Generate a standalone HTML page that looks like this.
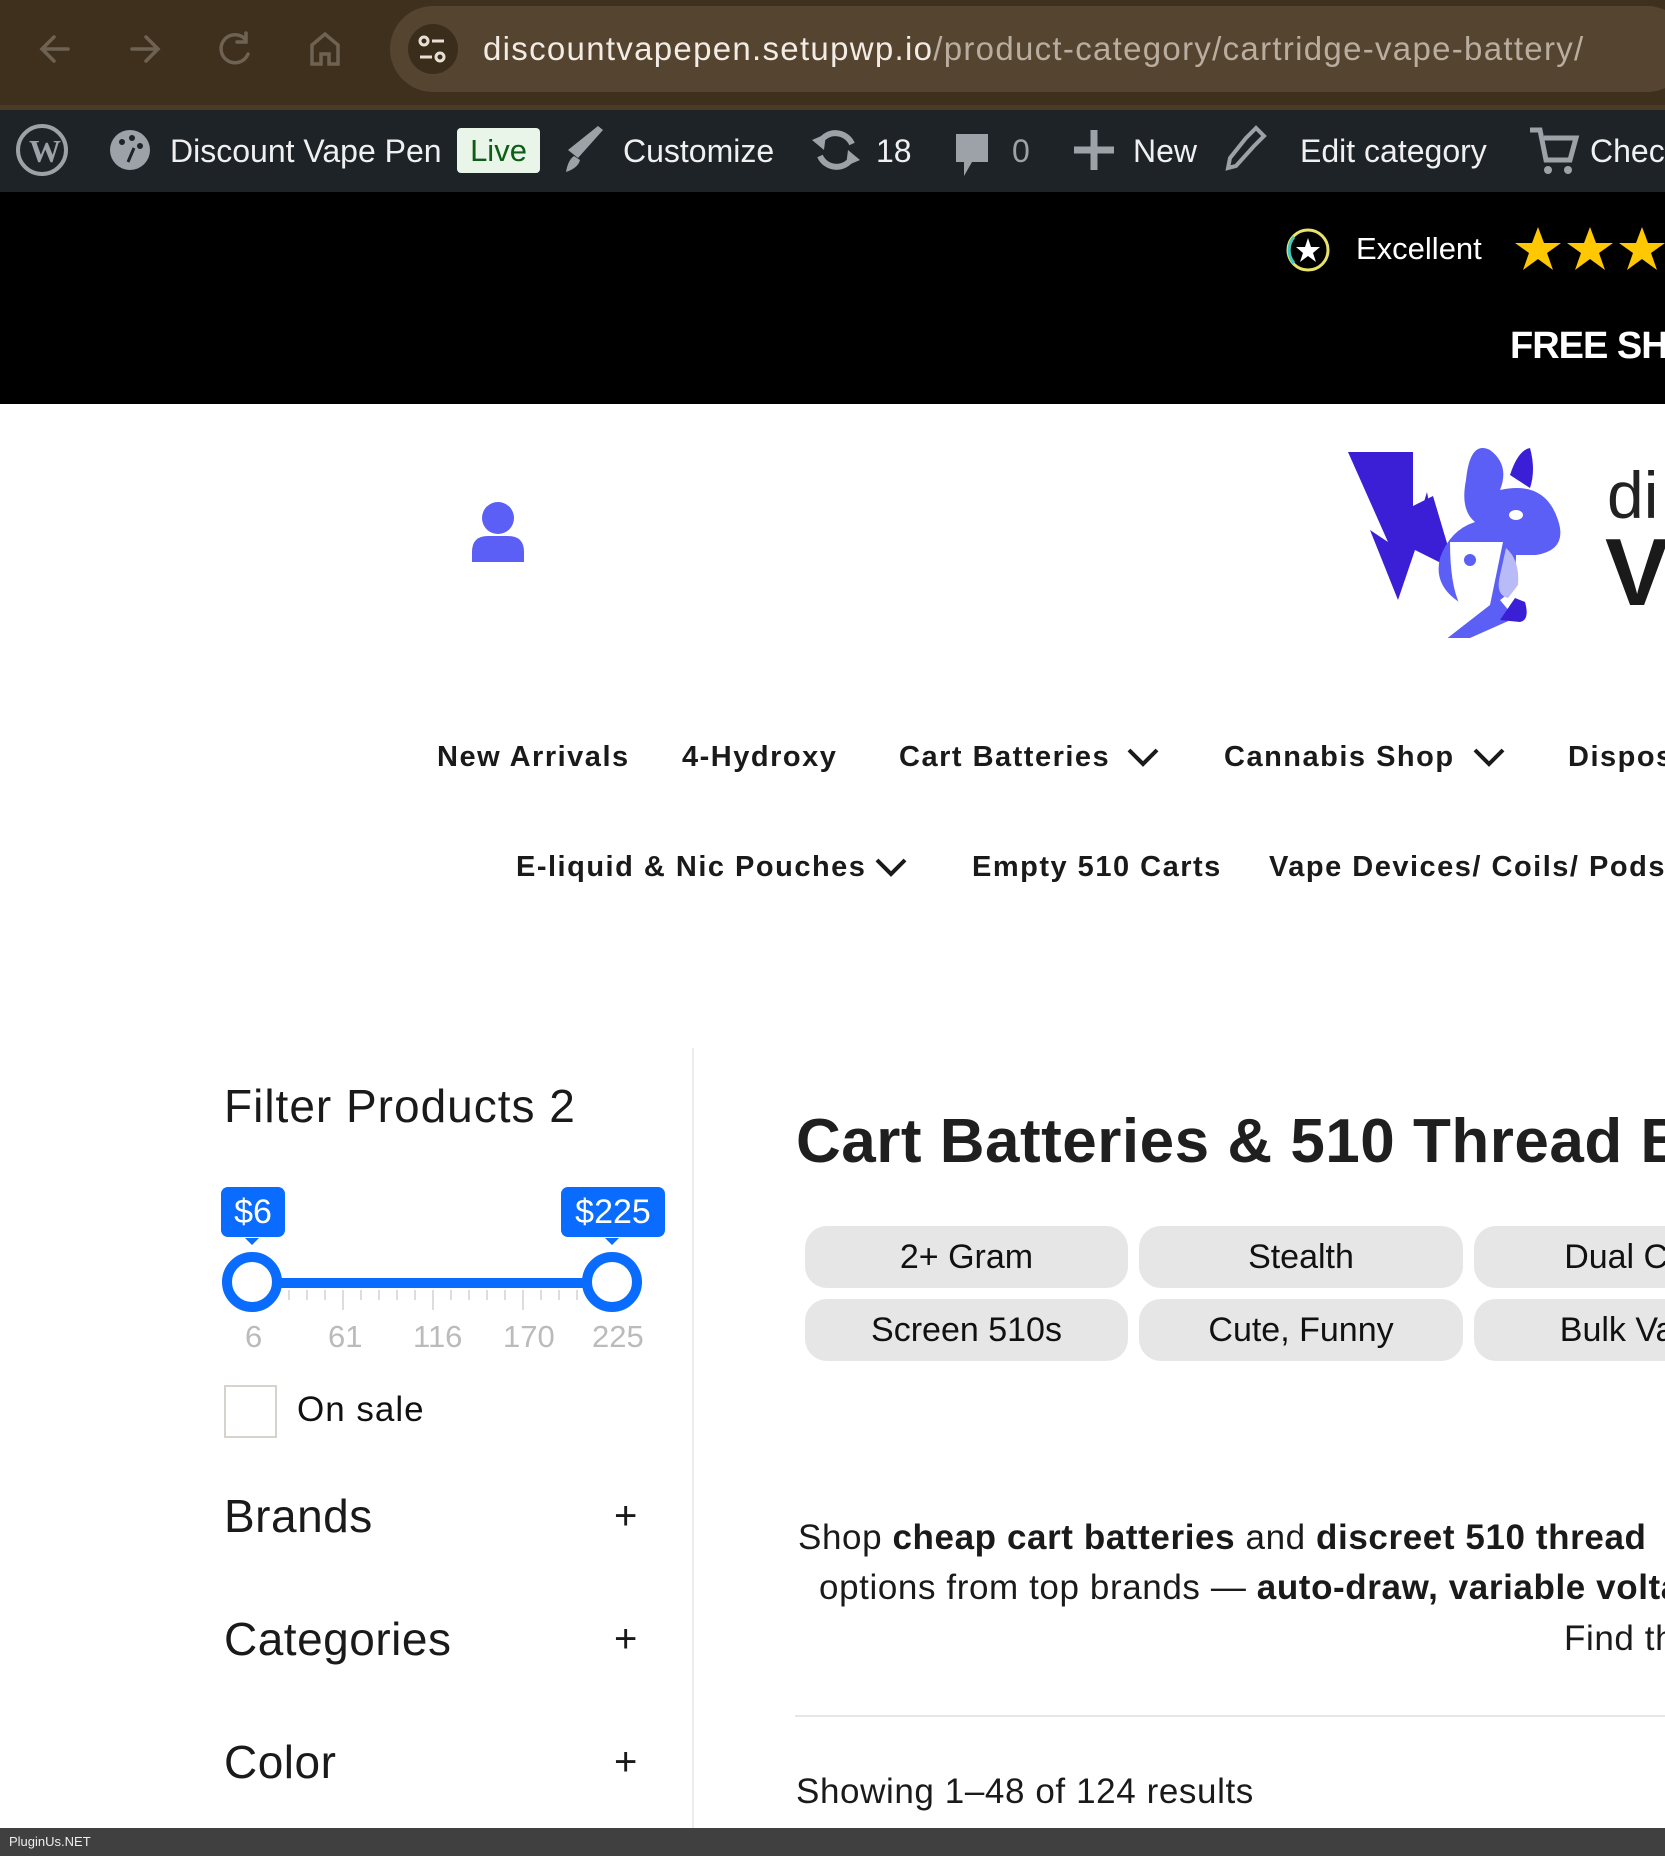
<!DOCTYPE html>
<html><head><meta charset="utf-8"><style>
*{margin:0;padding:0;box-sizing:border-box}
html,body{width:1665px;height:1856px;overflow:hidden;background:#fff;font-family:"Liberation Sans",sans-serif;position:relative}
#wrap{position:absolute;left:0;top:0;width:1665px;height:1856px;overflow:hidden}
.a{position:absolute;white-space:nowrap}
.nav{font-weight:bold;font-size:29px;color:#1a1a1a;line-height:30px;letter-spacing:1.5px}
.pill{position:absolute;background:#e6e6e6;border-radius:22px;font-size:34px;color:#111;text-align:center;line-height:62px;height:62px;white-space:nowrap;overflow:hidden}
.sb{font-size:46px;color:#1a1a1a;line-height:48px;letter-spacing:0.5px}
.plus{font-size:40px;color:#1a1a1a;line-height:40px}
.p{font-size:35px;line-height:40px;color:#1a1a1a;letter-spacing:0.6px}
</style></head><body><div id="wrap">
<!-- browser bar -->
<div class="a" style="left:0;top:0;width:1665px;height:110px;background:#3f301e"></div>
<div class="a" style="left:0;top:105px;width:1665px;height:5px;background:#4a3a26"></div>
<div class="a" style="left:390px;top:6px;width:1300px;height:86px;background:#544430;border-radius:43px"></div>
<div class="a" style="left:408px;top:24px;width:50px;height:50px;background:#3a2d1c;border-radius:25px"></div>
<svg class="a" style="left:0;top:0" width="390" height="100">
<g stroke="#6e6253" stroke-width="3.5" fill="none" stroke-linecap="round">
<path d="M68 49H42M54 37L42 49L54 61"/><path d="M132 49H158M146 37L158 49L146 61"/>
<path d="M246 40A14 14 0 1 0 248 54M246 33V42H237"/>
<path d="M312 64V45L325 34L338 45V64H329V54H321V64Z"/>
</g>
</svg>
<svg class="a" style="left:400px;top:20px" width="60" height="60"><g stroke="#e8e0d5" stroke-width="3" fill="none"><circle cx="24" cy="21" r="4"/><path d="M32 21H44M20 37H32"/><circle cx="40" cy="37" r="4"/></g></svg>
<div class="a" style="left:483px;top:30px;font-size:33px;line-height:38px;color:#f2ece4;letter-spacing:1.3px">discountvapepen.setupwp.io<span style="color:#b8ad9f">/product-category/cartridge-vape-battery/</span></div>
<!-- admin bar -->
<div class="a" style="left:0;top:110px;width:1665px;height:82px;background:#1d2327"></div>
<svg class="a" style="left:0;top:110px" width="1665" height="82">
<circle cx="42" cy="40" r="24" fill="none" stroke="#9ca2a7" stroke-width="4"/><text x="29" y="52" font-size="32" font-weight="bold" fill="#9ca2a7" font-family="Liberation Serif">W</text>
<circle cx="130" cy="40" r="20" fill="#9ca2a7"/><circle cx="122" cy="32" r="3" fill="#1d2327"/><circle cx="132" cy="28" r="3" fill="#1d2327"/><circle cx="140" cy="36" r="3" fill="#1d2327"/><path d="M128 52L134 38" stroke="#1d2327" stroke-width="3"/>
<path d="M568 40L598 16L603 20L578 48Z M574 46Q568 50 566 62Q578 58 580 50Z" fill="#9ca2a7"/>
<path d="M820 32A18 18 0 0 1 852 34M852 48A18 18 0 0 1 820 46" stroke="#9ca2a7" stroke-width="6" fill="none"/><path d="M812 30L826 24L824 40Z M860 50L846 56L848 40Z" fill="#9ca2a7"/>
<path d="M956 24H988V52H972L964 66V52H956Z" fill="#9ca2a7"/>
<path d="M1094 20V60M1074 40H1114" stroke="#9ca2a7" stroke-width="7"/>
<path d="M1246 28L1256 18L1264 26L1254 36L1236 56L1228 58L1230 48Z" fill="none" stroke="#9ca2a7" stroke-width="4"/>
<path d="M1530 20H1540L1546 50H1570L1576 28H1544" fill="none" stroke="#9ca2a7" stroke-width="5"/><circle cx="1548" cy="60" r="4" fill="#9ca2a7"/><circle cx="1568" cy="60" r="4" fill="#9ca2a7"/>
</svg>
<div class="a" style="left:170px;top:131px;font-size:32px;line-height:40px;color:#f0f0f1">Discount Vape Pen</div>
<div class="a" style="left:457px;top:128px;width:83px;height:45px;background:#e9f5e9;border-radius:4px;font-size:31px;line-height:45px;text-align:center;color:#0d5d17">Live</div>
<div class="a" style="left:623px;top:131px;font-size:32px;line-height:40px;color:#f0f0f1">Customize</div>
<div class="a" style="left:876px;top:131px;font-size:32px;line-height:40px;color:#f0f0f1">18</div>
<div class="a" style="left:1012px;top:131px;font-size:32px;line-height:40px;color:#9ca2a7">0</div>
<div class="a" style="left:1133px;top:131px;font-size:32px;line-height:40px;color:#f0f0f1">New</div>
<div class="a" style="left:1300px;top:131px;font-size:32px;line-height:40px;color:#f0f0f1">Edit category</div>
<div class="a" style="left:1590px;top:131px;font-size:32px;line-height:40px;color:#f0f0f1">Check</div>
<!-- black banner -->
<div class="a" style="left:0;top:192px;width:1665px;height:212px;background:#000"></div>
<svg class="a" style="left:1280px;top:225px" width="385" height="50">
<circle cx="28" cy="25" r="20" fill="none" stroke="#e8e36a" stroke-width="3"/><path d="M14 12A20 20 0 0 0 14 38" stroke="#3ec8c0" stroke-width="3" fill="none"/>
<path d="M28 13L31 22H40L33 28L36 37L28 31L20 37L23 28L16 22H25Z" fill="#fff"/>
<g fill="#ffc800"><path d="M258 2L264 18H281L267 28L273 45L258 34L243 45L249 28L235 18H252Z"/><path d="M310 2L316 18H333L319 28L325 45L310 34L295 45L301 28L287 18H304Z"/><path d="M362 2L368 18H385L371 28L377 45L362 34L347 45L353 28L339 18H356Z"/></g>
</svg>
<div class="a" style="left:1356px;top:230px;font-size:31px;line-height:38px;color:#fff">Excellent</div>
<div class="a" style="left:1510px;top:324px;font-size:38px;line-height:44px;color:#fff;font-weight:bold;letter-spacing:-1px">FREE SHIPPING</div>
<!-- header -->
<svg class="a" style="left:470px;top:500px" width="56" height="64"><circle cx="28" cy="18" r="16" fill="#5b5ff5"/><path d="M2 62V52Q2 36 18 36H38Q54 36 54 52V62Z" fill="#5b5ff5"/></svg>
<svg class="a" style="left:1340px;top:430px" width="260" height="215">
<path d="M8 22H73V76L93 66L115 140L75 120L58 170L30 100L48 112Z" fill="#3a1fd6"/>
<path d="M87 62L100 130L70 112L60 150Z" fill="#3a1fd6"/>
<path d="M126 50Q130 10 150 20Q170 35 160 60Q205 50 218 90Q228 120 196 125L176 125Q176 160 160 170L175 188L130 208L95 208L130 178Q92 160 100 128Q110 100 135 92Q120 80 126 50Z" fill="#5b5ff5"/>
<path d="M170 45Q178 20 190 18Q196 40 190 58Z" fill="#3a1fd6"/>
<ellipse cx="176" cy="85" rx="7" ry="5" fill="#fff"/>
<path d="M110 112L163 112L150 175L105 210L80 210Q100 190 120 175Q110 155 110 112Z" fill="#fff"/>
<circle cx="130" cy="130" r="6" fill="#5b5ff5"/>
<path d="M166 118Q180 130 178 155L168 168Q155 165 160 145Z" fill="#b8bbf7"/>
<path d="M175 168L185 172Q190 190 180 192L160 190Z" fill="#3a1fd6"/>
</svg>
<div class="a" style="left:1607px;top:460px;font-size:66px;line-height:70px;color:#222">di</div>
<div class="a" style="left:1605px;top:525px;font-size:96px;line-height:96px;color:#1a1a1a;font-weight:900">V</div>
<!-- nav -->
<div class="a nav" style="left:437px;top:742px">New Arrivals</div>
<div class="a nav" style="left:682px;top:742px">4-Hydroxy</div>
<div class="a nav" style="left:899px;top:742px">Cart Batteries</div>
<div class="a nav" style="left:1224px;top:742px">Cannabis Shop</div>
<div class="a nav" style="left:1568px;top:742px">Disposables</div>
<div class="a nav" style="left:516px;top:852px">E-liquid &amp; Nic Pouches</div>
<div class="a nav" style="left:972px;top:852px">Empty 510 Carts</div>
<div class="a nav" style="left:1269px;top:852px">Vape Devices/ Coils/ Pods</div>
<svg class="a" style="left:0;top:0" width="1665" height="900"><g stroke="#1a1a1a" stroke-width="4" fill="none"><path d="M1129 750L1143 764L1157 750"/><path d="M1475 750L1489 764L1503 750"/><path d="M877 860L891 874L905 860"/></g></svg>
<!-- sidebar -->
<div class="a" style="left:692px;top:1048px;width:2px;height:780px;background:#ececec"></div>
<div class="a" style="left:224px;top:1080px;font-size:46px;line-height:52px;color:#1a1a1a;letter-spacing:1px">Filter Products 2</div>
<div class="a" style="left:221px;top:1187px;width:64px;height:50px;background:#0a6cff;border-radius:7px;color:#fff;font-size:34px;line-height:50px;text-align:center">$6</div>
<div class="a" style="left:561px;top:1187px;width:104px;height:50px;background:#0a6cff;border-radius:7px;color:#fff;font-size:34px;line-height:50px;text-align:center">$225</div>
<svg class="a" style="left:200px;top:1230px" width="480" height="90">
<path d="M45 8L52 15L59 8Z M405 8L412 15L419 8Z" fill="#0a6cff"/>
<g stroke="#ddd" stroke-width="2"><path d="M89 60V70M107 60V70M125 60V70M143 60V80M161 60V70M179 60V70M197 60V70M215 60V70M233 60V80M251 60V70M269 60V70M287 60V70M305 60V70M323 60V80M341 60V70M359 60V70M377 60V70"/></g>
<rect x="60" y="48" width="355" height="10" fill="#0a6cff"/>
<circle cx="52" cy="52" r="25" fill="#fff" stroke="#0a6cff" stroke-width="10"/>
<circle cx="412" cy="52" r="25" fill="#fff" stroke="#0a6cff" stroke-width="10"/>
</svg>
<div class="a" style="left:0;top:1318px;font-size:31px;line-height:38px;color:#bbb">
<span class="a" style="left:245px">6</span><span class="a" style="left:328px">61</span><span class="a" style="left:413px">116</span><span class="a" style="left:503px">170</span><span class="a" style="left:592px">225</span></div>
<div class="a" style="left:224px;top:1385px;width:53px;height:53px;border:2px solid #d6d2cc"></div>
<div class="a" style="left:297px;top:1390px;font-size:35px;line-height:40px;color:#111;letter-spacing:1px">On sale</div>
<div class="a sb" style="left:224px;top:1492px">Brands</div>
<div class="a sb" style="left:224px;top:1615px">Categories</div>
<div class="a sb" style="left:224px;top:1738px">Color</div>
<div class="a plus" style="left:614px;top:1496px">+</div>
<div class="a plus" style="left:614px;top:1619px">+</div>
<div class="a plus" style="left:614px;top:1742px">+</div>
<!-- main -->
<div class="a" style="left:796px;top:1108px;font-size:62px;line-height:68px;color:#1f1f1f;font-weight:bold;letter-spacing:0.5px">Cart Batteries &amp; 510 Thread Batteries</div>
<div class="pill" style="left:805px;top:1226px;width:323px">2+ Gram</div>
<div class="pill" style="left:1139px;top:1226px;width:324px">Stealth</div>
<div class="pill" style="left:1474px;top:1226px;width:324px">Dual Cart</div>
<div class="pill" style="left:805px;top:1299px;width:323px">Screen 510s</div>
<div class="pill" style="left:1139px;top:1299px;width:324px">Cute, Funny</div>
<div class="pill" style="left:1474px;top:1299px;width:324px">Bulk Vape</div>
<div class="a p" style="left:798px;top:1518px">Shop <b>cheap cart batteries</b> and <b>discreet 510 thread</b></div>
<div class="a p" style="left:819px;top:1568px">options from top brands — <b>auto-draw, variable voltage</b></div>
<div class="a p" style="left:1564px;top:1619px">Find the</div>
<div class="a" style="left:795px;top:1715px;width:870px;height:2px;background:#e6e6e6"></div>
<div class="a p" style="left:796px;top:1772px">Showing 1–48 of 124 results</div>
<!-- status bar -->
<div class="a" style="left:0;top:1828px;width:1665px;height:28px;background:#404040"></div>
<div class="a" style="left:9px;top:1834px;font-size:13px;line-height:16px;color:#eee">PluginUs.NET</div>
</div></body></html>
